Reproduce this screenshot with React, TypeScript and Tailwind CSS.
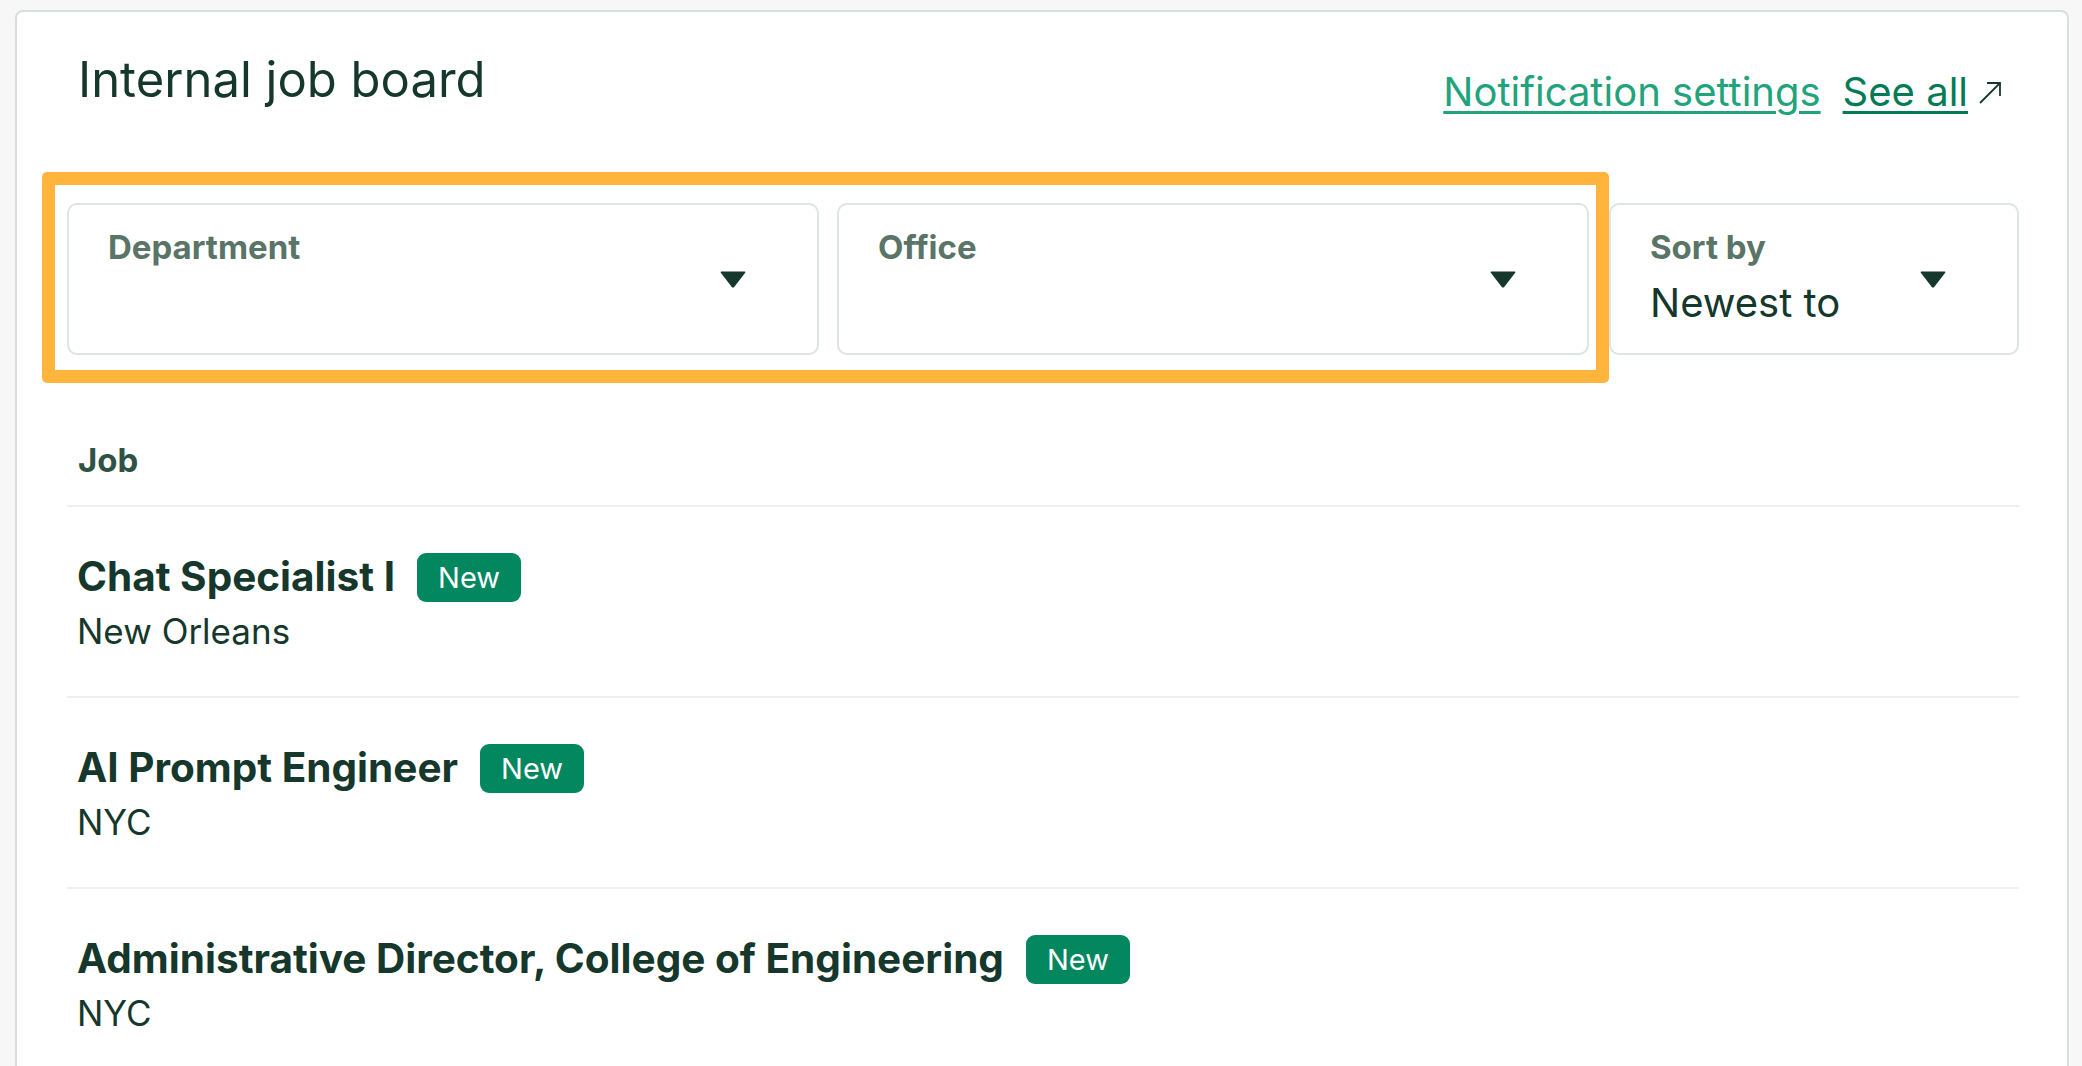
import React from "react";

const jobs = [
  { title: "Chat Specialist I", location: "New Orleans" },
  { title: "AI Prompt Engineer", location: "NYC" },
  { title: "Administrative Director, College of Engineering", location: "NYC" },
];

function Caret() {
  return (
    <svg width="26" height="17" viewBox="0 0 26 17" className="shrink-0">
      <path d="M1.5 0.5 H24.5 Q26 0.5 25 2 L14.2 16 Q13 17.2 11.8 16 L1 2 Q0 0.5 1.5 0.5 Z" fill="#15372c" />
    </svg>
  );
}

function Dropdown({ label, value, className }: { label: string; value?: string; className?: string }) {
  return (
    <div className={`h-[152px] border-2 border-[#e0e4e3] rounded-[10px] bg-white flex items-center pl-[39px] pr-[71px] ${className ?? ""}`}>
      <div className="flex-1 self-start pt-[22px]">
        <div className="text-[33px] leading-[40px] font-bold text-[#5a7468]">{label}</div>
        {value && <div className="mt-[13px] text-[40px] leading-[46px] text-[#15372c]">{value}</div>}
      </div>
      <Caret />
    </div>
  );
}

export default function App() {
  return (
    <div className="min-h-screen bg-[#f7f7f7] pl-[15px] pr-[13px] pt-[10px] font-[family-name:Inter,sans-serif]">
      <div className="bg-white border-2 border-[#d8dedb] rounded-t-[8px] pl-[50px] pr-[48px] pt-[38px] pb-[40px]">
        {/* header */}
        <div className="flex justify-between items-start h-[66px]">
          <h1 className="ml-[11px] text-[49px] leading-[60px] text-[#15372c]">Internal job board</h1>
          <div className="mt-[18px] mr-[17px] flex items-center text-[40px] leading-[48px]">
            <a className="text-[#22a37b] underline decoration-[3px] underline-offset-[5px]">Notification settings</a>
            <a className="ml-[22px] text-[#047a56] underline decoration-[3px] underline-offset-[5px]">See all</a>
            <svg width="24" height="24" viewBox="0 0 24 24" className="ml-[10px] mt-[2px]" fill="none" stroke="#15372c" strokeWidth="1.8">
              <path d="M2 22 L22 2" />
              <path d="M9 2 H22 V15" />
            </svg>
          </div>
        </div>

        {/* filters */}
        <div className="mt-[87px] flex">
          <div className="relative flex gap-[18px]">
            <Dropdown label="Department" className="w-[752px]" />
            <Dropdown label="Office" className="w-[752px]" />
            <div className="absolute -left-[25px] -top-[31px] -right-[20px] -bottom-[28px] border-[13px] border-[#ffb53b] rounded-[5px] pointer-events-none" />
          </div>
          <Dropdown label="Sort by" value="Newest to" className="ml-[20px] flex-1" />
        </div>

        {/* list */}
        <div className="mt-[85px] pb-[25px] pl-[11px] border-b-2 border-[#efefef] text-[33px] leading-[40px] font-bold text-[#2f5244]">
          Job
        </div>
        {jobs.map((job) => (
          <div key={job.title} className="pt-[44px] pb-[43px] pl-[10px] border-b-2 border-[#efefef]">
            <div className="flex items-center h-[52px]">
              <span className="text-[40.5px] leading-[52px] font-bold text-[#15372c]">{job.title}</span>
              <span className="ml-[22px] h-[49px] px-[21px] rounded-[9px] bg-[#03875f] text-white text-[29px] leading-[49px]">
                New
              </span>
            </div>
            <div className="mt-[6px] text-[35px] leading-[44px] text-[#15372c]">{job.location}</div>
          </div>
        ))}
      </div>
    </div>
  );
}
